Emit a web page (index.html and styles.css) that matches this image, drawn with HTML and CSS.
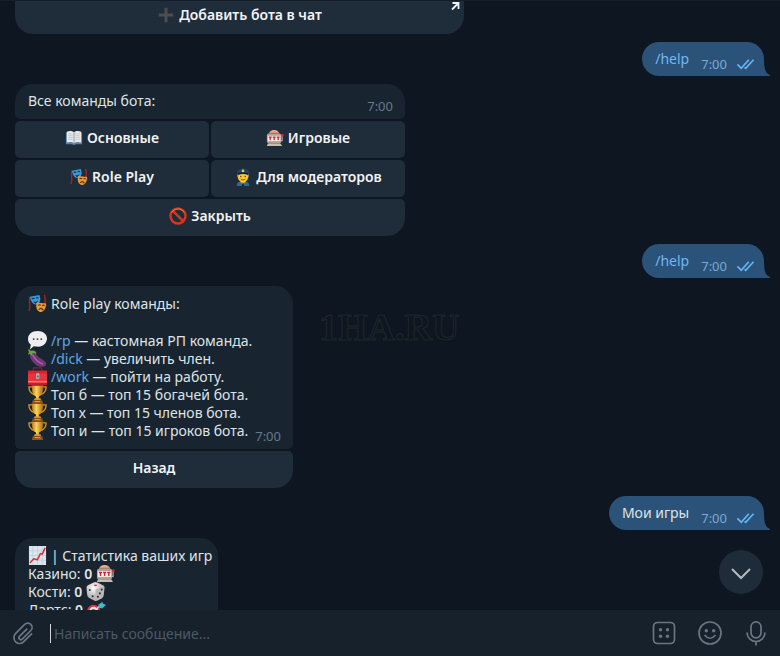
FILE: index.html
```html
<!DOCTYPE html>
<html lang="ru">
<head>
<meta charset="utf-8">
<title>Чат</title>
<link rel="stylesheet" href="styles.css">
</head>
<body>
<svg class="defs" aria-hidden="true">
  <defs>
    <linearGradient id="gold" x1="0" x2="1"><stop offset="0" stop-color="#b87412"/><stop offset=".4" stop-color="#ffd65a"/><stop offset="1" stop-color="#a8640c"/></linearGradient>
    <radialGradient id="die" cx=".4" cy=".3"><stop offset="0" stop-color="#fff"/><stop offset="1" stop-color="#b9b6b5"/></radialGradient>
  </defs>
  <symbol id="plus" viewBox="0 0 20 20"><path d="M8.300 2h3.400v6.300H18v3.400h-6.300V18H8.300v-6.300H2V8.300h6.300z" fill="#4c4d4e"/></symbol>
  <symbol id="book" viewBox="0 0 20 20"><path d="M1 4h18v13h-7l-2 1-2-1H1z" fill="#4c87a8"/><path d="M2 3c3-1 6-1 8 1 2-2 5-2 8-1v12c-3-1-6-1-8 1-2-2-5-2-8-1z" fill="#e9e9eb"/><path d="M10 4v12" stroke="#8d8f96"/><path d="M3.500 5.500h5M3.500 7.500h5M3.500 9.500h5M3.500 11.500h5M11.500 5.500h5M11.500 7.500h5M11.500 9.500h5M11.500 11.500h5" stroke="#b8bac0" stroke-width=".7"/></symbol>
  <symbol id="slot" viewBox="0 0 20 20"><path d="M18 7v6h-2" stroke="#a8aaad" stroke-width="1.300" fill="none"/><circle cx="18.300" cy="7" r="1.500" fill="#e5202b"/><path d="M3 5c1-3 3-4 6-4s5 1 6 4z" fill="#dc9570"/><path d="M6 3c2-1.500 4-1.500 6 0" stroke="#f3c8a0" fill="none"/><rect x="1" y="5" width="16" height="11" rx="2" fill="#aaa298"/><rect x="2" y="7.500" width="14" height="6" fill="#f7f4ef"/><path d="M3 9h3.400M4.700 9v3.500M7.400 9h3.400M9.100 9v3.500M11.800 9h3.400M13.500 9v3.500" stroke="#d7242b" stroke-width="1.500"/><path d="M2 16h14l2 3H1z" fill="#c5beb5"/></symbol>
  <symbol id="masks" viewBox="0 0 20 20"><path d="M2 3C0 8 4 11 1 18M17 1c3 4-1 7 2 12" stroke="#b91f19" stroke-width="1.400" fill="none"/><path d="M2 3l10-2c2 5 1 9-4 10-3 0-5-3-6-8z" fill="#3997d5"/><path d="M4 5q1.500-1 3 0M8.500 4.300q1.500-1 2.500 0" stroke="#0c355c" stroke-width="1.300" fill="none"/><path d="M5.500 7.500q3 2 5-1-1 4-3 3.500z" fill="#092c48"/><path d="M9 9l10 1c0 6-3 9-6 9-4-1-5-5-4-10z" fill="#e79a39"/><path d="M10.500 12q1.500-1 3 0M15 12.300q1.500-1 2.500 0" stroke="#6b360b" stroke-width="1.200" fill="none"/><path d="M11.500 16.500q2-3 4.500.5" stroke="#6b360b" stroke-width="1.500" fill="none"/></symbol>
  <symbol id="officer" viewBox="0 0 20 20"><path d="M3 20c0-4 2-5 7-5s7 1 7 5z" fill="#2d6b96"/><path d="M7.500 14h5v2L10 19l-2.500-3z" fill="#d9961c"/><path d="M9.300 17h1.400l.5 3H8.800z" fill="#102439"/><path d="M4 6h12c1 5-2 10-6 10S3 11 4 6z" fill="#fac62b"/><path d="M3 4.500C4 2 7 1 10 0c3 1 6 2 7 4.500L15.500 8Q10 5.500 4.500 8z" fill="#1c4367"/><path d="M4 6q6-2 12 0v1q-6-1.500-12 0z" fill="#0b1727"/><circle cx="10" cy="3.300" r="1.500" fill="#ebc333"/><circle cx="7.500" cy="9.500" r=".8" fill="#603d13"/><circle cx="12.500" cy="9.500" r=".8" fill="#603d13"/><path d="M7.500 12.500q2.500 1.500 5 0" stroke="#80501a" fill="none"/></symbol>
  <symbol id="ban" viewBox="0 0 20 20"><circle cx="10" cy="10" r="8.300" fill="none" stroke="#d9341c" stroke-width="2.700"/><path d="M4.300 4.300l11.400 11.400" stroke="#d9341c" stroke-width="2.700"/><path d="M3 6a8.300 8.300 0 0 1 14 0" stroke="#f17657" fill="none"/></symbol>
  <symbol id="speech" viewBox="0 0 20 20"><path d="M10 0c6 0 10 3.500 10 8s-4 8.500-9 8.500L6 16l-4 3.500 1-5C1 13 0 11 0 8.500 0 3.500 4 0 10 0z" fill="#efeff0"/><g fill="#35383b"><circle cx="6" cy="8.500" r="1"/><circle cx="10" cy="8.500" r="1"/><circle cx="14" cy="8.500" r="1"/></g></symbol>
  <symbol id="eggplant" viewBox="0 0 20 20"><path d="M2 3c3-1 6 0 7 3 2 4 9 5 10 9 1 4-5 5-10 2C4 14 1 9 2 3z" fill="#713774"/><path d="M5 6c2 5 6 8 11 10" stroke="#a867a8" stroke-width="1.500" fill="none"/><path d="M1 0l2 2c3-1 5 0 6 3L5 4 4 7 2 5 0 6l1-3-1-2z" fill="#72a435"/></symbol>
  <symbol id="toolbox" viewBox="0 0 20 20"><path d="M5 4l1-3h8l1 3" stroke="#70292d" stroke-width="1.300" fill="none"/><path d="M0 4h20v15H0z" fill="#e8343b"/><path d="M0 4h20v3H0z" fill="#d4242d"/><path d="M0 15.500h20" stroke="#f7a09c"/><path d="M0 17h20v2H0z" fill="#b81f28"/><rect x="8.500" y="6.500" width="3.500" height="6" rx="1" fill="#a9b4bf"/><path d="M9.300 9h2v2h-2z" fill="#616971"/></symbol>
  <symbol id="trophy" viewBox="0 0 20 20"><path d="M5 2H1c0 5 2 7 6 8M15 2h4c0 5-2 7-6 8" stroke="#cf901d" stroke-width="1.500" fill="none"/><path d="M4 0h12c0 7-1 11-4.500 12v3h-3v-3C5 11 4 7 4 0z" fill="url(#gold)"/><path d="M4 .5h12" stroke="#7f4a0d"/><path d="M7 14h6l1 2H6z" fill="#d59a27"/><path d="M5 16h10l1 4H4z" fill="#93501b"/><path d="M7 17.500h6" stroke="#e5ae38"/></symbol>
  <symbol id="chart" viewBox="0 0 20 20"><rect x="1" y="0" width="18" height="20" fill="#dce5ec"/><path d="M5 0v20M10 0v20M15 0v20M1 5h18M1 10h18M1 15h18" stroke="#b8ccda" stroke-width=".7"/><path d="M2 18l4-4.500 4 1L13 8l2 .5L18 2" stroke="#d52932" stroke-width="1.500" fill="none"/></symbol>
  <symbol id="dice" viewBox="0 0 20 20"><path d="M8 .5q2-.8 4 0l6 3q2 1 1.500 3l-1 8q-.3 2-2 2.800L12 19.500q-2 .8-3.500 0L3 16.500q-1.500-1-1.800-3L.5 6q0-2 1.500-2.700z" fill="url(#die)"/><path d="M10 8l9-4-1 11-8 5z" fill="#bbb8b7"/><ellipse cx="10" cy="3.500" rx="1.700" ry="1" fill="#d74743"/><g fill="#303134"><circle cx="4" cy="8.500" r="1.100"/><circle cx="7" cy="15" r="1.100"/><circle cx="12.500" cy="15.500" r="1.100"/><circle cx="14.600" cy="12" r="1.100"/><circle cx="16.500" cy="8" r="1.100"/></g></symbol>
  <symbol id="dart" viewBox="0 0 20 20"><circle cx="7" cy="12" r="7" fill="#d33947"/><circle cx="7" cy="12" r="4.800" fill="#e9e3df"/><circle cx="7" cy="12" r="2.600" fill="#c62c3c"/><path d="M7 12l7-6" stroke="#d6dde0" stroke-width="1.500"/><path d="M12 5l4-3 1 2 3 1-4 4-4-1z" fill="#43b9c8"/></symbol>
  <symbol id="checks" viewBox="0 0 20 12"><path d="M1.500 6.500L5.500 10.500 13.500 1.500M9 9.500L10.200 10.500 18.500 1.500" fill="none" stroke="currentColor" stroke-width="1.800"/></symbol>
  <symbol id="tail" viewBox="0 0 6 18"><path d="M0 0c0 10 1 15 6 17v1H0z" fill="currentColor"/></symbol>
</svg>

<main class="chat">
  <section class="card card-invite">
    <button class="key key-cut"><svg class="emoji"><use href="#plus"/></svg>Добавить бота в чат
      <svg class="external" viewBox="0 0 10 10"><path d="M2.500 2h6v6M8.500 2L2 8.500" fill="none" stroke="currentColor" stroke-width="1.800"/></svg></button>
  </section>

  <div class="sent"><a href="#help">/help</a><time>7:00</time><svg class="checks"><use href="#checks"/></svg><svg class="tail"><use href="#tail"/></svg></div>

  <section class="card card-menu">
    <div class="message"><p>Все команды бота:</p><time>7:00</time></div>
    <div class="keys">
      <button class="key"><svg class="emoji"><use href="#book"/></svg>Основные</button>
      <button class="key"><svg class="emoji"><use href="#slot"/></svg>Игровые</button>
      <button class="key"><svg class="emoji"><use href="#masks"/></svg>Role Play</button>
      <button class="key"><svg class="emoji"><use href="#officer"/></svg>Для модераторов</button>
      <button class="key key-last"><svg class="emoji"><use href="#ban"/></svg>Закрыть</button>
    </div>
  </section>

  <div class="sent"><a href="#help">/help</a><time>7:00</time><svg class="checks"><use href="#checks"/></svg><svg class="tail"><use href="#tail"/></svg></div>

  <section class="card card-roleplay">
    <div class="message">
      <div class="lines">
        <p class="heading"><svg class="emoji"><use href="#masks"/></svg>Role play команды:</p>
        <p><svg class="emoji"><use href="#speech"/></svg><a href="#rp">/rp</a> — кастомная РП команда.</p>
        <p><svg class="emoji"><use href="#eggplant"/></svg><a href="#dick">/dick</a> — увеличить член.</p>
        <p><svg class="emoji"><use href="#toolbox"/></svg><a href="#work">/work</a> — пойти на работу.</p>
        <p><svg class="emoji"><use href="#trophy"/></svg>Топ б — топ 15 богачей бота.</p>
        <p><svg class="emoji"><use href="#trophy"/></svg>Топ х — топ 15 членов бота.</p>
        <p><svg class="emoji"><use href="#trophy"/></svg>Топ и — топ 15 игроков бота.</p>
      </div>
      <time>7:00</time>
    </div>
    <div class="keys"><button class="key key-last">Назад</button></div>
  </section>

  <div class="sent"><span>Мои игры</span><time>7:00</time><svg class="checks"><use href="#checks"/></svg><svg class="tail"><use href="#tail"/></svg></div>

  <section class="card card-stats">
    <div class="message">
      <div class="lines">
        <p><svg class="emoji"><use href="#chart"/></svg>| Статистика ваших игр</p>
        <p>Казино: <b>0</b> <svg class="emoji"><use href="#slot"/></svg></p>
        <p>Кости: <b>0</b> <svg class="emoji"><use href="#dice"/></svg></p>
        <p>Дартс: <b>0</b> <svg class="emoji"><use href="#dart"/></svg></p>
      </div>
    </div>
  </section>

  <div class="watermark">1HA.RU</div>
  <button class="scroll-down" aria-label="Вниз"><svg viewBox="0 0 20 12"><path d="M1 1l9 9 9-9" fill="none" stroke="currentColor" stroke-width="2"/></svg></button>
</main>

<form class="composer">
  <button type="button" aria-label="Прикрепить файл"><svg viewBox="0 0 24 24"><path d="M16.300 7.600L8.500 15.400a1.900 1.900 0 0 0 2.700 2.700l8.600-8.600a4.300 4.300 0 0 0-6.100-6.100l-9 9a6 6 0 0 0 0 8.500 5.500 5.500 0 0 0 7.800 0l8.500-8.500"/></svg></button>
  <input type="text" aria-label="Сообщение" placeholder="Написать сообщение...">
  <button type="button" aria-label="Клавиатура бота"><svg viewBox="0 0 24 24"><rect x="1.500" y="1.500" width="21" height="21" rx="4"/><g class="dots"><circle cx="8.500" cy="8.800" r="1.700"/><circle cx="15.500" cy="8.800" r="1.700"/><circle cx="8.500" cy="15.200" r="1.700"/><circle cx="15.500" cy="15.200" r="1.700"/></g></svg></button>
  <button type="button" aria-label="Эмодзи"><svg viewBox="0 0 24 24"><circle cx="12" cy="12" r="11"/><path d="M6.500 14q5.500 6.500 11 0"/><g class="dots"><circle cx="8.300" cy="9.800" r="1.700"/><circle cx="15.700" cy="9.800" r="1.700"/></g></svg></button>
  <button type="button" aria-label="Голосовое сообщение"><svg viewBox="0 0 24 24"><rect x="7" y=".8" width="10" height="16" rx="5"/><path d="M3 11.500a9 9 0 0 0 18 0M12 20.500v4"/></svg></button>
</form>
</body>
</html>
```
FILE: styles.css
```css
* { box-sizing: border-box; }

body {
  margin: 0;
  height: 100vh;
  display: flex;
  flex-direction: column;
  overflow: hidden;
  background: #0e1621;
  color: #dfe3e6;
  font: 14px/18px "Noto Sans", "Open Sans", sans-serif;
}

p { margin: 0; }
a { color: #5fa6e2; text-decoration: none; }
b { font-weight: 600; }
button { border: 0; padding: 0; background: none; color: inherit; font: inherit; }
.defs { position: absolute; width: 0; height: 0; }

.chat {
  position: relative;
  flex: 1;
  min-height: 0;
  overflow: hidden;
  display: flex;
  flex-direction: column;
  gap: 8px;
  padding: 0 16px 0 15px;
  border-top: 1px solid #131e29;
}
.chat > * { flex-shrink: 0; }

.card { max-width: 100%; display: flex; flex-direction: column; gap: 2px; }
.card-invite { width: 449px; }
.card-menu { width: 390px; }
.card-roleplay { width: 278px; }
.card-stats { width: 203px; }

.message {
  display: flex;
  justify-content: space-between;
  align-items: flex-end;
  padding: 8px 12px 9px 13px;
  border-radius: 18px 18px 5px 5px;
  background: #182531;
}
.lines { padding-bottom: 1px; white-space: nowrap; }
.lines p { height: 18px; }
.lines .heading { margin-bottom: 19px; }
time { color: #66788a; font-size: 13px; line-height: 18px; }
.message time { margin-bottom: -5px; }

.emoji { width: 19px; height: 19px; margin-right: 4px; vertical-align: -4px; }

.keys { display: grid; grid-template-columns: 1fr 1fr; gap: 2px; }
.key {
  position: relative;
  height: 37px;
  padding-bottom: 3px;
  border-radius: 5px;
  background: #1f2c39;
  color: #f1f3f4;
  font-weight: 600;
}
.key .emoji { width: 18px; height: 18px; margin-right: 4px; }
.key-last { grid-column: 1 / -1; border-radius: 5px 5px 18px 18px; }
.key-cut { height: 33px; padding-bottom: 6px; border-radius: 0 0 18px 18px; }
.external { position: absolute; top: 0; right: 4px; width: 10px; height: 10px; }

.sent {
  position: relative;
  align-self: flex-end;
  display: flex;
  height: 34px;
  padding: 8px 9px 8px 13px;
  border-radius: 17px 17px 0 17px;
  background: #2b5278;
}
.sent a { color: #72b7f0; }
.sent time { margin: 5px 9px 0 12px; color: #7da8d3; }
.checks { width: 19px; height: 12px; margin-top: 8px; color: #65b5f5; }
.tail { position: absolute; right: -6px; bottom: 0; width: 6px; height: 18px; color: #2b5278; }

.watermark {
  position: absolute;
  top: 304px;
  left: 319px;
  color: transparent;
  -webkit-text-stroke: 1px #1f262b;
  font: bold 38px/44px "Liberation Serif", serif;
}

.scroll-down {
  position: absolute;
  right: 17px;
  bottom: 16px;
  width: 44px;
  height: 44px;
  display: grid;
  place-items: center;
  border-radius: 50%;
  background: #1e2b38;
  color: #b5babf;
}
.scroll-down svg { width: 20px; height: 12px; margin-top: 4px; }

.composer {
  display: flex;
  align-items: center;
  height: 46px;
  padding: 0 12px 0 11px;
  gap: 22px;
  background: #17212b;
}
.composer button { width: 24px; height: 24px; color: #697681; }
.composer svg { display: block; width: 24px; height: 24px; overflow: visible; fill: none; stroke: currentColor; stroke-width: 1.7; }
.composer .dots { fill: currentColor; stroke: none; }
.composer input {
  flex: 1;
  min-width: 0;
  height: 19px;
  margin-left: -7px;
  padding: 0 0 0 3px;
  border: 0;
  border-left: 1px solid #d3d8dc;
  outline: 0;
  background: none;
  color: #dfe3e6;
  font: inherit;
}
.composer input::placeholder { color: #4b5966; opacity: 1; }
```
